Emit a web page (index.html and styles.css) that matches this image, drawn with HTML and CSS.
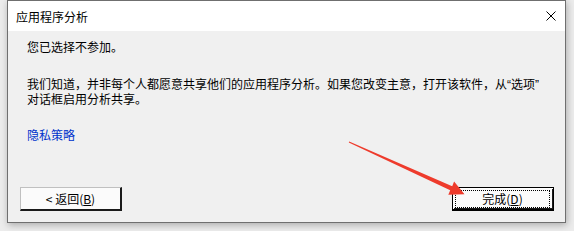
FILE: index.html
```html
<!DOCTYPE html>
<html lang="zh-CN">
<head>
<meta charset="utf-8">
<title>应用程序分析</title>
<link rel="stylesheet" href="styles.css">
</head>
<body>
<div class="window">
  <div class="titlebar">
    <span class="title">应用程序分析</span>
    <span class="close">
      <svg width="10" height="10" viewBox="0 0 10 10"><path d="M0.5 0.5 L9.5 9.5 M9.5 0.5 L0.5 9.5" stroke="#000" stroke-width="1" fill="none"/></svg>
    </span>
  </div>
  <div class="content">
    <p class="line first">您已选择不参加。</p>
    <p class="line para">我们知道，并非每个人都愿意共享他们的应用程序分析。如果您改变主意，打开该软件，从<span class="q">“</span>选项<span class="q">”</span>对话框启用分析共享。</p>
    <a class="link">隐私策略</a>
    <div class="spacer"></div>
    <div class="buttons">
      <button class="btn">&lt; 返回(<u>B</u>)</button>
      <button class="btn default"><span class="focus">完成(<u>D</u>)</span></button>
    </div>
  </div>
  <svg class="arrow" width="574" height="231" viewBox="0 0 574 231">
    <polygon fill="#ee3b2c" points="348.8,142.6 450.2,190.2 448.3,194.8 464.5,194.3 454.1,181.6 452.2,186.2 349.2,141.4"/>
  </svg>
</div>
</body>
</html>
```

FILE: styles.css
```css
html, body {
  margin: 0;
  padding: 0;
}
body {
  width: 574px;
  height: 231px;
  background: #ececec;
  overflow: hidden;
  font-family: "Noto Sans CJK SC", "Microsoft YaHei", sans-serif;
  font-size: 12px;
  color: #000;
}
.window {
  position: relative;
  margin-left: 7px;
  width: 559px;
  height: 223px;
  box-sizing: border-box;
  border: 1px solid #6f6f6f;
  background: #f0f0f0;
  display: flex;
  flex-direction: column;
  box-shadow: 1px 2px 7px rgba(0,0,0,0.28);
}
.titlebar {
  height: 30px;
  background: #fff;
  display: flex;
  align-items: center;
  justify-content: space-between;
  padding: 0 9px 0 8px;
}
.title {
  font-size: 12px;
  line-height: 14px;
  padding-top: 1px;
}
.close {
  display: flex;
  width: 10px;
  height: 10px;
  margin-top: -1px;
}
.content {
  flex: 1;
  display: flex;
  flex-direction: column;
  padding: 9px 11px 11px 19px;
}
.line {
  margin: 0;
  line-height: 13px;
  font-size: 12px;
}
.para {
  margin-top: 24px;
  width: 520px;
}
.q {
  font-family: "Liberation Sans", Arial, sans-serif;
}
.link {
  margin-top: 23px;
  color: #0033cc;
  line-height: 13px;
  align-self: flex-start;
  cursor: pointer;
}
.spacer {
  flex: 1;
}
.buttons {
  display: flex;
  justify-content: space-between;
  margin-left: -7px;
}
.btn {
  width: 102px;
  height: 24px;
  box-sizing: border-box;
  padding: 0;
  margin: 0;
  font-family: "Noto Sans CJK SC", "Microsoft YaHei", sans-serif;
  font-size: 12px;
  color: #000;
  background: #fbfbfb;
  border-style: solid;
  border-width: 1px 2px 2px 1px;
  border-color: #c0c0c0 #1a1a1a #1a1a1a #c0c0c0;
  display: flex;
  align-items: center;
  justify-content: center;
  line-height: 14px;
}
.btn u {
  text-decoration: underline;
}
.btn.default {
  border: 1px solid #000;
  border-bottom-width: 2px;
  box-shadow: inset 1px 1px 0 #fff, inset -1px -1px 0 #1a1a1a;
  padding: 2px 3px 1px 2px;
}
.focus {
  flex: 1;
  align-self: stretch;
  border: 1px dotted #000;
  display: flex;
  align-items: center;
  justify-content: center;
}
.arrow {
  position: absolute;
  left: -8px;
  top: -1px;
  pointer-events: none;
}
```
